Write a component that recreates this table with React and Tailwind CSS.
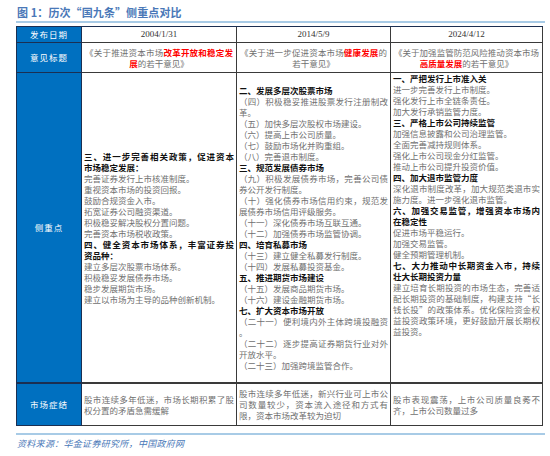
import React from "react";

const F = { fontFamily: '"Noto Sans CJK SC", "Noto Sans", sans-serif' };

function L({ children, b, full }) {
  const cls = b
    ? full
      ? "whitespace-nowrap font-bold text-[#111] text-justify [text-align-last:justify]"
      : "whitespace-nowrap font-bold text-[#111]"
    : full
    ? "whitespace-nowrap text-[#707070] text-justify [text-align-last:justify]"
    : "whitespace-nowrap text-[#707070]";
  return <div className={cls}>{children}</div>;
}

function R({ children }) {
  return <span className="text-[#ff0000] font-bold">{children}</span>;
}

function Head({ children }) {
  return (
    <div className="bg-[#0070c0] border-r border-b border-[#1b2f52] flex items-center justify-center text-white text-[8.5px] tracking-[1px]">
      {children}
    </div>
  );
}

function Cell({ children, className }) {
  return (
    <div className={"border-r border-b border-[#3a3a3a] text-[8.5px] leading-[11px] " + (className || "")}>
      {children}
    </div>
  );
}

export default function App() {
  return (
    <div className="w-[550px] h-[456px] bg-white pt-[5px] pl-[16px]" style={F}>
      <div className="h-[15px] leading-[15px] text-[11px] font-bold tracking-[0.1px] text-[#4a78b8] pl-[1px]">
        图 1：历次“国九条”侧重点对比
      </div>
      <div className="mt-[1px] h-[2px] w-[529px] bg-[#a8cbe6]" />
      <div className="mt-[3px] grid w-fit grid-cols-[65px_155px_154px_152px] grid-rows-[16px_30px_311px_42px] border-l border-t border-[#1b2f52]">
        {/* Row 1 */}
        <Head>发布日期</Head>
        <Cell className="flex items-center justify-center text-[9px] text-[#333] [font-family:'Liberation_Serif',serif]">2004/1/31</Cell>
        <Cell className="flex items-center justify-center text-[9px] text-[#333] [font-family:'Liberation_Serif',serif]">2014/5/9</Cell>
        <Cell className="flex items-center justify-center text-[9px] text-[#333] [font-family:'Liberation_Serif',serif]">2024/4/12</Cell>

        {/* Row 2 */}
        <Head>意见标题</Head>
        <Cell className="flex flex-col justify-center px-[3px] text-center leading-[10px] text-[#707070]">
          <div className="whitespace-nowrap text-justify [text-align-last:justify]">
            《关于推进资本市场<R>改革开放和稳定发</R>
          </div>
          <div className="whitespace-nowrap">
            <R>展</R>的若干意见》
          </div>
        </Cell>
        <Cell className="flex flex-col justify-center px-[3px] text-center leading-[10px] text-[#707070]">
          <div className="whitespace-nowrap text-justify [text-align-last:justify]">
            《关于进一步促进资本市场<R>健康发展</R>的
          </div>
          <div className="whitespace-nowrap">若干意见》</div>
        </Cell>
        <Cell className="flex flex-col justify-center px-[3px] text-center leading-[10px] text-[#707070]">
          <div className="whitespace-nowrap text-justify [text-align-last:justify]">
            《关于加强监管防范风险推动资本市场
          </div>
          <div className="whitespace-nowrap">
            <R>高质量发展</R>的若干意见》
          </div>
        </Cell>

        {/* Row 3 */}
        <div className="bg-[#0070c0] border-r border-b-2 border-[#1b2f52] flex items-center justify-center text-white text-[8.5px] tracking-[1px]">
          侧重点
        </div>
        <Cell className="flex flex-col justify-center px-[2px] border-b-2">
          <L b full>三、进一步完善相关政策，促进资本</L>
          <L b>市场稳定发展：</L>
          <L>完善证券发行上市核准制度。</L>
          <L>重视资本市场的投资回报。</L>
          <L>鼓励合规资金入市。</L>
          <L>拓宽证券公司融资渠道。</L>
          <L>积极稳妥解决股权分置问题。</L>
          <L>完善资本市场税收政策。</L>
          <L b full>四、健全资本市场体系，丰富证券投</L>
          <L b>资品种：</L>
          <L>建立多层次股票市场体系。</L>
          <L>积极稳妥发展债券市场。</L>
          <L>稳步发展期货市场。</L>
          <L>建立以市场为主导的品种创新机制。</L>
        </Cell>
        <Cell className="flex flex-col justify-center px-[2px] border-b-2">
          <L b>二、发展多层次股票市场</L>
          <L full>（四）积极稳妥推进股票发行注册制改</L>
          <L>革。</L>
          <L>（五）加快多层次股权市场建设。</L>
          <L>（六）提高上市公司质量。</L>
          <L>（七）鼓励市场化并购重组。</L>
          <L>（八）完善退市制度。</L>
          <L b>三、规范发展债券市场</L>
          <L full>（九）积极发展债券市场，完善公司债</L>
          <L>券公开发行制度。</L>
          <L full>（十）强化债券市场信用约束，规范发</L>
          <L>展债券市场信用评级服务。</L>
          <L>（十一）深化债券市场互联互通。</L>
          <L>（十二）加强债券市场监管协调。</L>
          <L b>四、培育私募市场</L>
          <L>（十三）建立健全私募发行制度。</L>
          <L>（十四）发展私募投资基金。</L>
          <L b>五、推进期货市场建设</L>
          <L>（十五）发展商品期货市场。</L>
          <L>（十六）建设金融期货市场。</L>
          <L b>七、扩大资本市场开放</L>
          <L full>（二十一）便利境内外主体跨境投融资</L>
          <L>。</L>
          <L full>（二十二）逐步提高证券期货行业对外</L>
          <L>开放水平。</L>
          <L>（二十三）加强跨境监管合作。</L>
        </Cell>
        <Cell className="flex flex-col justify-start px-[2px] border-b-2">
          <L b>一、严把发行上市准入关</L>
          <L>进一步完善发行上市制度。</L>
          <L>强化发行上市全链条责任。</L>
          <L>加大发行承销监管力度。</L>
          <L b>三、严格上市公司持续监管</L>
          <L>加强信息披露和公司治理监管。</L>
          <L>全面完善减持规则体系。</L>
          <L>强化上市公司现金分红监管。</L>
          <L>推动上市公司提升投资价值。</L>
          <L b>四、加大退市监管力度</L>
          <L full>深化退市制度改革，加大规范类退市实</L>
          <L>施力度。进一步强化退市监管。</L>
          <L b full>六、加强交易监管，增强资本市场内</L>
          <L b>在稳定性</L>
          <L>促进市场平稳运行。</L>
          <L>加强交易监管。</L>
          <L>健全预期管理机制。</L>
          <L b full>七、大力推动中长期资金入市，持续</L>
          <L b>壮大长期投资力量</L>
          <L full>建立培育长期投资的市场生态，完善适</L>
          <L full>配长期投资的基础制度，构建支持“长</L>
          <L full>钱长投”的政策体系。优化保险资金权</L>
          <L full>益投资政策环境，更好鼓励开展长期权</L>
          <L>益投资。</L>
        </Cell>

        {/* Row 4 */}
        <Head>市场症结</Head>
        <Cell className="flex flex-col justify-center px-[2px]">
          <L full>股市连续多年低迷，市场长期积累了股</L>
          <L>权分置的矛盾急需缓解</L>
        </Cell>
        <Cell className="flex flex-col justify-center px-[2px]">
          <L full>股市连续多年低迷，新兴行业可上市公</L>
          <L full>司数量较少，资本流入途径和方式有</L>
          <L>限，资本市场改革较为迫切</L>
        </Cell>
        <Cell className="flex flex-col justify-center px-[2px]">
          <L full>股市表现震荡，上市公司质量良莠不</L>
          <L>齐，上市公司数量过多</L>
        </Cell>
      </div>
      <div className="mt-[7px] h-[2px] w-[529px] bg-[#a8cbe6]" />
      <div className="mt-[3px] text-[9px] leading-[12px] italic tracking-[0.3px] text-[#4a78b8] pl-[1px]">
        资料来源：华金证券研究所，中国政府网
      </div>
    </div>
  );
}
